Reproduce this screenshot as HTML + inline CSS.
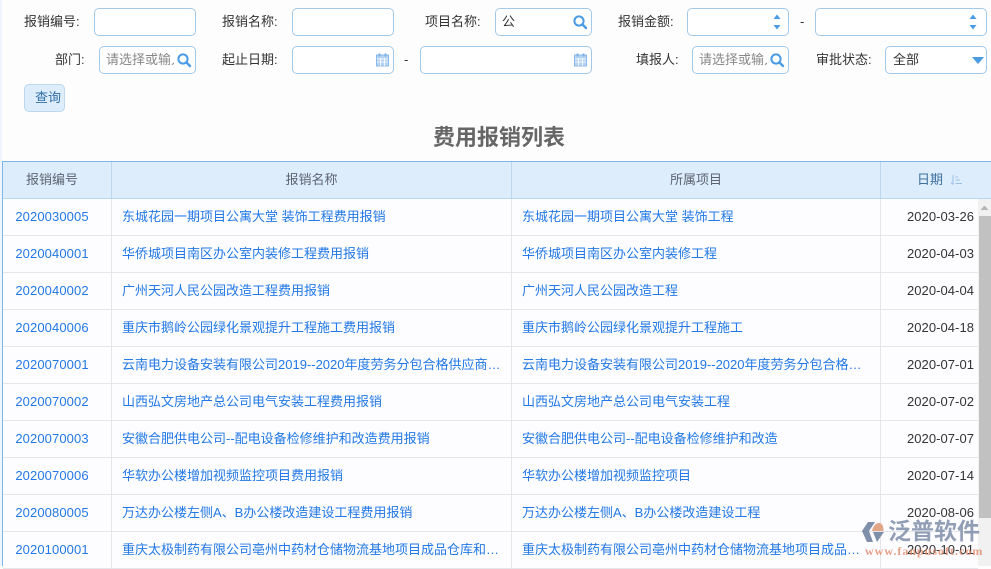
<!DOCTYPE html>
<html lang="zh-CN">
<head>
<meta charset="utf-8">
<style>
html,body{margin:0;padding:0}
body{width:991px;height:566px;overflow:hidden;position:relative;background:#fdfdfe;font-family:"Liberation Sans","Noto Sans CJK SC",sans-serif;font-size:13px;color:#333}
.a{position:absolute;white-space:nowrap}
.l{position:absolute;white-space:nowrap;height:28px;line-height:28px;color:#333;font-size:13px}
.i{position:absolute;box-sizing:border-box;height:28px;border:1px solid #a3c9e8;border-radius:5px;background:#fff;line-height:26px;white-space:nowrap;overflow:hidden;font-size:13px}
.ph{position:absolute;left:6px;top:0;color:#888;width:68px;overflow:hidden}
svg{position:absolute;display:block}
.hd{position:absolute;top:162px;height:37px;line-height:35px;background:#deedfc;text-align:center;color:#5c6470;font-size:13px;box-sizing:border-box;border-right:1px solid #bcd7ee;border-bottom:1px solid #b8d8f2}
.c{position:absolute;height:37px;line-height:35px;box-sizing:border-box;border-right:1px solid #e4e6e9;border-bottom:1px solid #e4e6e9;white-space:nowrap;overflow:hidden;font-size:13px;background:#fdfdff}
.n{left:3px;width:109px;padding-right:10px;text-align:center;color:#2278e6;letter-spacing:.1px}
.t{left:112px;width:400px;padding-left:10px;color:#2278e6}
.p{left:512px;width:369px;padding-left:10px;color:#2278e6}
.d{left:881px;width:97px;text-align:right;padding-right:4px;color:#333;border-right:none;letter-spacing:.05px}
</style>
</head>
<body>
<div class="a" style="left:0;top:0;width:2px;height:566px;background:#eef5fd"></div>

<div class="l" style="left:24px;top:8px">报销编号:</div>
<div class="i" style="left:94px;top:8px;width:102px"></div>
<div class="l" style="left:222px;top:8px">报销名称:</div>
<div class="i" style="left:292px;top:8px;width:102px"></div>
<div class="l" style="left:425px;top:8px">项目名称:</div>
<div class="i" style="left:495px;top:8px;width:97px"><span style="position:absolute;left:6px;color:#333">公</span>
<svg style="left:76px;top:5px" width="16" height="16" viewBox="0 0 16 16"><circle cx="7" cy="7" r="4.600" fill="none" stroke="#4a9be4" stroke-width="2"/><path d="M10.500 10.500L14 14" stroke="#4a9be4" stroke-width="2.400" stroke-linecap="round"/></svg></div>
<div class="l" style="left:618px;top:8px">报销金额:</div>
<div class="i" style="left:687px;top:8px;width:102px">
<svg style="left:82px;top:3px" width="14" height="20" viewBox="0 0 14 20"><path d="M3.500 7L7 2.500L10.500 7Z" fill="#4a9be4"/><path d="M3.500 13L10.500 13L7 17.500Z" fill="#4a9be4"/></svg></div>
<div class="l" style="left:800px;top:8px">-</div>
<div class="i" style="left:815px;top:8px;width:172px">
<svg style="left:150px;top:3px" width="14" height="20" viewBox="0 0 14 20"><path d="M3.500 7L7 2.500L10.500 7Z" fill="#4a9be4"/><path d="M3.500 13L10.500 13L7 17.500Z" fill="#4a9be4"/></svg></div>

<div class="l" style="left:55px;top:46px">部门:</div>
<div class="i" style="left:99px;top:46px;width:97px"><span class="ph">请选择或输入</span>
<svg style="left:76px;top:5px" width="16" height="16" viewBox="0 0 16 16"><circle cx="7" cy="7" r="4.600" fill="none" stroke="#4a9be4" stroke-width="2"/><path d="M10.500 10.500L14 14" stroke="#4a9be4" stroke-width="2.400" stroke-linecap="round"/></svg></div>
<div class="l" style="left:222px;top:46px">起止日期:</div>
<div class="i" style="left:292px;top:46px;width:102px">
<svg style="left:83px;top:6px" width="13" height="14" viewBox="0 0 13 14"><rect x=".5" y="2" width="12" height="11" fill="#b5d3f2" stroke="#8cbaea"/><rect x="2.500" y=".5" width="2" height="3" fill="#7db0e6"/><rect x="8.500" y=".5" width="2" height="3" fill="#7db0e6"/><path d="M1 6h11M1 9h11M4.500 5v8M8.500 5v8" stroke="#fff" stroke-width=".8"/></svg></div>
<div class="l" style="left:404px;top:46px">-</div>
<div class="i" style="left:420px;top:46px;width:172px">
<svg style="left:153px;top:6px" width="13" height="14" viewBox="0 0 13 14"><rect x=".5" y="2" width="12" height="11" fill="#b5d3f2" stroke="#8cbaea"/><rect x="2.500" y=".5" width="2" height="3" fill="#7db0e6"/><rect x="8.500" y=".5" width="2" height="3" fill="#7db0e6"/><path d="M1 6h11M1 9h11M4.500 5v8M8.500 5v8" stroke="#fff" stroke-width=".8"/></svg></div>
<div class="l" style="left:636px;top:46px">填报人:</div>
<div class="i" style="left:692px;top:46px;width:97px"><span class="ph">请选择或输入</span>
<svg style="left:76px;top:5px" width="16" height="16" viewBox="0 0 16 16"><circle cx="7" cy="7" r="4.600" fill="none" stroke="#4a9be4" stroke-width="2"/><path d="M10.500 10.500L14 14" stroke="#4a9be4" stroke-width="2.400" stroke-linecap="round"/></svg></div>
<div class="l" style="left:816px;top:46px">审批状态:</div>
<div class="i" style="left:885px;top:46px;width:102px"><span style="position:absolute;left:7px;color:#333">全部</span>
<svg style="left:85px;top:9px" width="14" height="9" viewBox="0 0 14 9"><path d="M1 1H13L7 8Z" fill="#4a9be4"/></svg></div>

<div class="a" style="left:24px;top:84px;width:41px;height:28px;box-sizing:border-box;background:#deedfc;border:1px solid #bcd7ee;border-radius:5px;line-height:25px;padding-left:10px;color:#2f6ea5;font-size:13px">查询</div>

<div class="a" style="left:0;top:123px;width:998px;text-align:center;font-size:22px;font-weight:bold;color:#666;line-height:30px">费用报销列表</div>

<div class="a" style="left:2px;top:161px;width:989px;height:1px;background:#7fb6e6"></div>
<div class="a" style="left:2px;top:161px;width:1px;height:405px;background:#7fb6e6"></div>

<div class="hd" style="left:3px;width:109px;padding-right:10px">报销编号</div>
<div class="hd" style="left:112px;width:400px">报销名称</div>
<div class="hd" style="left:512px;width:369px">所属项目</div>
<div class="hd" style="left:881px;width:110px;border-right:none;padding-right:12px;color:#3d6f9f">日期
<svg style="left:69px;top:12px" width="13" height="12" viewBox="0 0 13 12"><path d="M3 1V10M1 8.500L3 10.500M5.500 3H8M5.500 6H10M5.500 9.500H12" stroke="#9bbfe4" stroke-width="1" fill="none"/></svg></div>

<div class="c n" style="top:199px">2020030005</div><div class="c t" style="top:199px">东城花园一期项目公寓大堂 装饰工程费用报销</div><div class="c p" style="top:199px">东城花园一期项目公寓大堂 装饰工程</div><div class="c d" style="top:199px">2020-03-26</div>
<div class="c n" style="top:236px">2020040001</div><div class="c t" style="top:236px">华侨城项目南区办公室内装修工程费用报销</div><div class="c p" style="top:236px">华侨城项目南区办公室内装修工程</div><div class="c d" style="top:236px">2020-04-03</div>
<div class="c n" style="top:273px">2020040002</div><div class="c t" style="top:273px">广州天河人民公园改造工程费用报销</div><div class="c p" style="top:273px">广州天河人民公园改造工程</div><div class="c d" style="top:273px">2020-04-04</div>
<div class="c n" style="top:310px">2020040006</div><div class="c t" style="top:310px">重庆市鹅岭公园绿化景观提升工程施工费用报销</div><div class="c p" style="top:310px">重庆市鹅岭公园绿化景观提升工程施工</div><div class="c d" style="top:310px">2020-04-18</div>
<div class="c n" style="top:347px">2020070001</div><div class="c t" style="top:347px">云南电力设备安装有限公司2019--2020年度劳务分包合格供应商…</div><div class="c p" style="top:347px">云南电力设备安装有限公司2019--2020年度劳务分包合格…</div><div class="c d" style="top:347px">2020-07-01</div>
<div class="c n" style="top:384px">2020070002</div><div class="c t" style="top:384px">山西弘文房地产总公司电气安装工程费用报销</div><div class="c p" style="top:384px">山西弘文房地产总公司电气安装工程</div><div class="c d" style="top:384px">2020-07-02</div>
<div class="c n" style="top:421px">2020070003</div><div class="c t" style="top:421px">安徽合肥供电公司--配电设备检修维护和改造费用报销</div><div class="c p" style="top:421px">安徽合肥供电公司--配电设备检修维护和改造</div><div class="c d" style="top:421px">2020-07-07</div>
<div class="c n" style="top:458px">2020070006</div><div class="c t" style="top:458px">华软办公楼增加视频监控项目费用报销</div><div class="c p" style="top:458px">华软办公楼增加视频监控项目</div><div class="c d" style="top:458px">2020-07-14</div>
<div class="c n" style="top:495px">2020080005</div><div class="c t" style="top:495px">万达办公楼左侧A、B办公楼改造建设工程费用报销</div><div class="c p" style="top:495px">万达办公楼左侧A、B办公楼改造建设工程</div><div class="c d" style="top:495px">2020-08-06</div>
<div class="c n" style="top:532px">2020100001</div><div class="c t" style="top:532px">重庆太极制药有限公司亳州中药材仓储物流基地项目成品仓库和…</div><div class="c p" style="top:532px">重庆太极制药有限公司亳州中药材仓储物流基地项目成品…</div><div class="c d" style="top:532px">2020-10-01</div>

<div class="a" style="left:978px;top:199px;width:13px;height:367px;background:#f1f1f1"></div>
<svg style="left:978px;top:199px" width="13" height="17" viewBox="0 0 13 17"><path d="M2.500 11L6.500 6.500L10.500 11Z" fill="#b5b5b5"/></svg>
<div class="a" style="left:979px;top:216px;width:12px;height:302px;background:#c1c1c1"></div>

<svg style="left:861px;top:521px" width="26" height="24" viewBox="0 0 26 24"><path d="M1 10L7 1H14L8 10L12 21H6Z" fill="#7f8ea9"/><path d="M11 10C12 5 15 2 18 2C21 2 22.500 5 22.500 10Z" fill="#e3a587"/><path d="M12 11H23L16 21Z" fill="#7f8ea9"/></svg>
<div class="a" style="left:888px;top:516px;font-size:23px;line-height:30px;font-weight:bold;color:#7f8ea9;opacity:.85">泛普软件</div>
<div class="a" style="left:865px;top:544px;font-family:'Liberation Serif',serif;font-weight:bold;font-size:12px;line-height:14px;color:#e0886a;opacity:.8;letter-spacing:1px">www.fanpusoft.com</div>
</body>
</html>
